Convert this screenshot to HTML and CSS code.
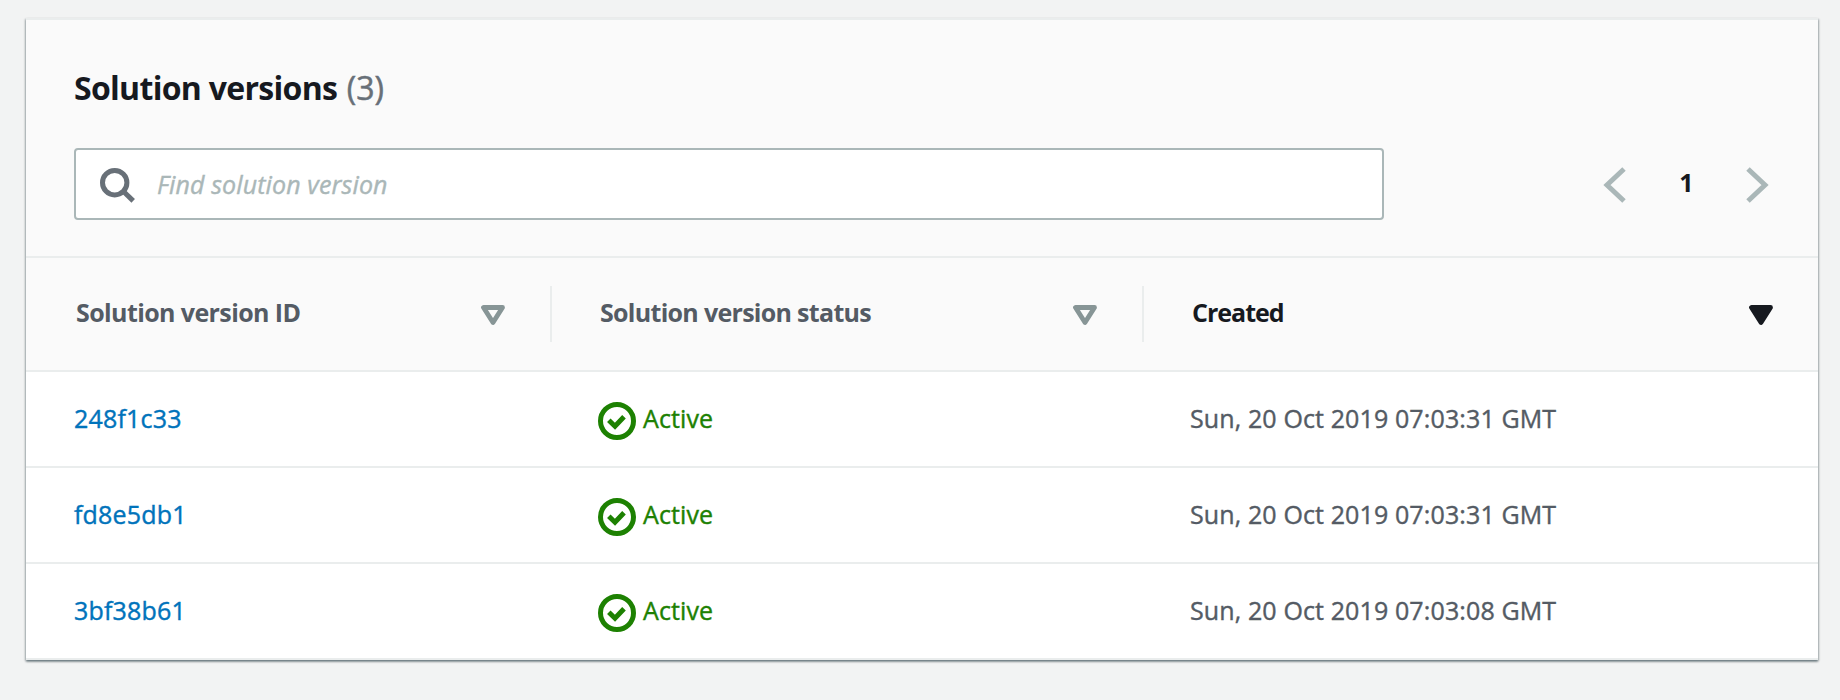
FILE: index.html
```html
<!DOCTYPE html>
<html lang="en">
<head>
<meta charset="utf-8">
<title>Solution versions</title>
<link rel="stylesheet" href="styles.css">
</head>
<body>
<svg width="0" height="0" class="sprite" aria-hidden="true">
  <symbol id="check" viewBox="0 0 38 38"><circle cx="19" cy="19" r="16.5" fill="none" stroke="currentColor" stroke-width="5"/><path d="M10.8 18.2l6.2 6 9-9.4" fill="none" stroke="currentColor" stroke-width="5"/></symbol>
  <symbol id="sort" viewBox="0 0 24 20"><path d="M2.5 2.5h19L12 17.5z" stroke="currentColor" stroke-width="4.8" stroke-linejoin="round"/></symbol>
</svg>
<section class="card">
  <header class="card-header">
    <h2 class="title">Solution versions <span class="count">(3)</span></h2>
    <div class="tools">
      <label class="search">
        <svg class="search-icon" viewBox="0 0 36 36"><circle cx="14.7" cy="14.7" r="12.2"/><path d="M23.5 23.5l9.7 9.4"/></svg>
        <input class="search-input" type="text" placeholder="Find solution version">
      </label>
      <nav class="pager">
        <svg class="chevron" viewBox="0 0 24 38"><path d="M21 3L4 19l17 16"/></svg>
        <span class="page">1</span>
        <svg class="chevron" viewBox="0 0 24 38"><path d="M3 3l17 16L3 35"/></svg>
      </nav>
    </div>
  </header>
  <div class="row head">
    <div class="th"><span class="label-id">Solution version ID</span><svg class="sort"><use href="#sort"/></svg></div>
    <div class="th"><span class="label-status">Solution version status</span><svg class="sort"><use href="#sort"/></svg></div>
    <div class="th sorted"><span class="label-created">Created</span><svg class="sort"><use href="#sort"/></svg></div>
  </div>
  <div class="row">
    <a class="td link">248f1c33</a>
    <div class="td status"><svg class="check"><use href="#check"/></svg><span>Active</span></div>
    <div class="td date">Sun, 20 Oct 2019 07:03:31 GMT</div>
  </div>
  <div class="row">
    <a class="td link">fd8e5db1</a>
    <div class="td status"><svg class="check"><use href="#check"/></svg><span>Active</span></div>
    <div class="td date">Sun, 20 Oct 2019 07:03:31 GMT</div>
  </div>
  <div class="row">
    <a class="td link">3bf38b61</a>
    <div class="td status"><svg class="check"><use href="#check"/></svg><span>Active</span></div>
    <div class="td date">Sun, 20 Oct 2019 07:03:08 GMT</div>
  </div>
</section>
</body>
</html>
```
FILE: styles.css
```css
* { box-sizing: border-box; }
body {
  margin: 0;
  min-height: 100vh;
  padding: 18px 22px 0 26px;
  background: #f2f3f3;
  font-family: "Open Sans", "Noto Sans", sans-serif;
  font-size: 25px;
  line-height: 36px;
  color: #545b64;
}
.sprite { display: block; height: 0; }
.card {
  width: 1792px;
  height: 642px;
  background: #fff;
  border-top: 2px solid #eaeded;
  box-shadow: 0 2px 2px 0 rgba(0,28,36,.3), 1px 1px 2px 0 rgba(0,28,36,.25), -1px 1px 2px 0 rgba(0,28,36,.25);
}
.card-header {
  height: 238px;
  padding: 48px 48px 0;
  background: #fafafa;
  border-bottom: 2px solid #eaeded;
}
.title {
  margin: 0 0 40px;
  font-size: 32px;
  line-height: 40px;
  font-weight: 700;
  letter-spacing: -.7px;
  color: #16191f;
  white-space: nowrap;
}
.count { margin-left: 2px; font-weight: 400; letter-spacing: 0; color: #687078; -webkit-text-stroke: .5px; }
.tools { display: flex; justify-content: space-between; }
.search {
  display: flex;
  align-items: center;
  width: 1310px;
  height: 72px;
  padding-left: 24px;
  background: #fff;
  border: 2px solid #aab7b8;
  border-radius: 4px;
}
.search-icon { width: 36px; height: 36px; margin-top: 4px; fill: none; stroke: #687078; stroke-width: 5; }
.search-input {
  flex: 1;
  margin-left: 21px;
  padding: 0;
  border: 0;
  outline: 0;
  background: none;
  font: italic 25px/36px "Open Sans", "Noto Sans", sans-serif;
  letter-spacing: .12px;
  -webkit-text-stroke: .4px;
}
.search-input::placeholder { color: #aab7b8; opacity: 1; }
.pager { display: flex; align-items: center; justify-content: space-between; width: 166px; height: 72px; margin-right: 1px; }
.chevron { width: 24px; height: 38px; margin-top: 2px; fill: none; stroke: #aab7b8; stroke-width: 5; }
.page { margin: 0 0 4px 1px; font-weight: 700; color: #16191f; font-size: 25px; }
.row { display: grid; grid-template-columns: 524px 592px 676px; height: 96px; border-bottom: 2px solid #eaeded; }
.head { height: 114px; background: #fafafa; }
.th {
  display: flex;
  align-items: center;
  justify-content: space-between;
  height: 56px;
  margin-top: 28px;
  padding: 0 45px 0 50px;
  border-right: 2px solid #eaeded;
  font-weight: 700;
  letter-spacing: -.6px;
  white-space: nowrap;
}
.th span { margin-bottom: 4px; }
.th + .th { padding-left: 48px; }
.th:nth-child(1) { width: 526px; }
.th:nth-child(2) { width: 592px; margin-left: 2px; }
.th.sorted { margin-left: 2px; border: 0; color: #16191f; }
.label-status { letter-spacing: -.7px; }
.label-created { letter-spacing: -1px; }
.sort { width: 24px; height: 20px; margin-top: 2px; color: #879596; fill: none; }
.sorted .sort { color: #16191f; fill: currentColor; }
.td { display: flex; align-items: center; padding: 0 0 2px 48px; white-space: nowrap; letter-spacing: .12px; -webkit-text-stroke: .4px; }
.link { color: #0073bb; letter-spacing: .2px; }
.status { gap: 7px; color: #1d8102; }
.check { width: 38px; height: 38px; margin-top: 6px; -webkit-text-stroke: 0; }
```
